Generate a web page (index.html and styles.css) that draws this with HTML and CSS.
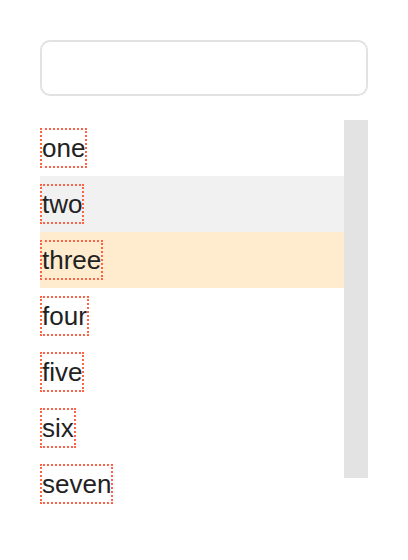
FILE: index.html
```html
<!DOCTYPE html>
<html>
<head>
<meta charset="utf-8">
<link rel="stylesheet" href="styles.css">
</head>
<body>
<div class="wrap">
  <input class="search" type="text">
  <div class="area">
    <ul class="list">
      <li class="item"><span class="label">one</span></li>
      <li class="item hover"><span class="label">two</span></li>
      <li class="item active"><span class="label">three</span></li>
      <li class="item"><span class="label">four</span></li>
      <li class="item"><span class="label">five</span></li>
      <li class="item"><span class="label">six</span></li>
      <li class="item"><span class="label">seven</span></li>
    </ul>
    <div class="scrollbar"></div>
  </div>
</div>
</body>
</html>
```

FILE: styles.css
```css
html, body {
  margin: 0;
  padding: 0;
  background: #fff;
}
body {
  font-family: "Liberation Sans", Arial, sans-serif;
  color: #222;
}
.wrap {
  padding: 40px;
  width: 328px;
  display: flex;
  flex-direction: column;
  gap: 24px;
}
.search {
  box-sizing: border-box;
  width: 328px;
  height: 56px;
  margin: 0;
  border: 2px solid #e2e2e2;
  border-radius: 10px;
  background: #fff;
  outline: none;
}
.area {
  display: flex;
  align-items: flex-start;
}
.list {
  list-style: none;
  margin: 0;
  padding: 0;
  width: 304px;
}
.item {
  height: 56px;
  box-sizing: border-box;
  padding: 8px 0;
  display: flex;
  align-items: flex-start;
}
.item.hover {
  background: #f1f1f1;
}
.item.active {
  background: #ffebcd;
}
.label {
  display: inline-block;
  border: 2px dotted #ff6347;
  font-size: 26px;
  line-height: 36px;
  height: 36px;
  padding: 0;
}
.scrollbar {
  width: 24px;
  height: 358px;
  background: #e3e3e3;
}
```
